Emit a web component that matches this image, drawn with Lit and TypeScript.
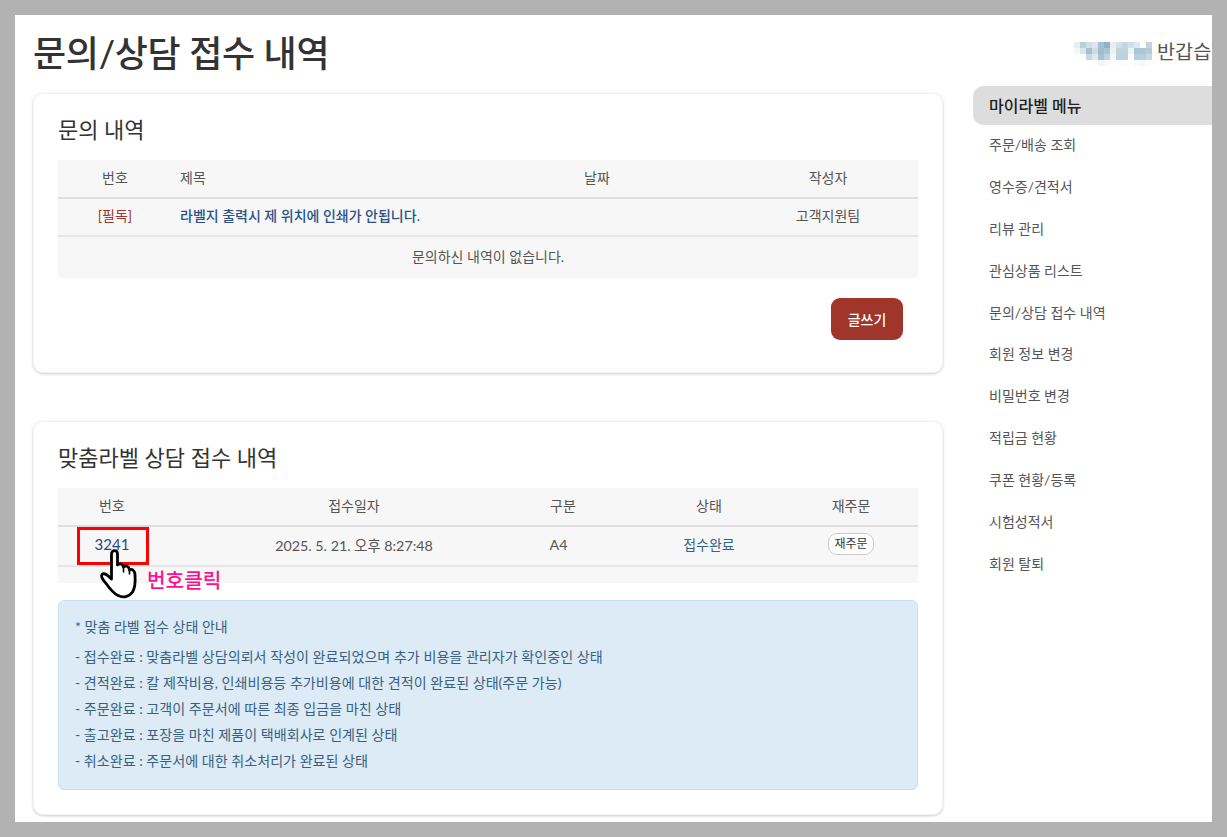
import { LitElement, html, css } from "lit";
import { customElement } from "lit/decorators.js";

const MENU = ["주문/배송 조회","영수증/견적서","리뷰 관리","관심상품 리스트","문의/상담 접수 내역","회원 정보 변경","비밀번호 변경","적립금 현황","쿠폰 현황/등록","시험성적서","회원 탈퇴"];
const NOTES = [
  "- 접수완료 : 맞춤라벨 상담의뢰서 작성이 완료되었으며 추가 비용을 관리자가 확인중인 상태",
  "- 견적완료 : 칼 제작비용, 인쇄비용등 추가비용에 대한 견적이 완료된 상태(주문 가능)",
  "- 주문완료 : 고객이 주문서에 따른 최종 입금을 마친 상태",
  "- 출고완료 : 포장을 마친 제품이 택배회사로 인계된 상태",
  "- 취소완료 : 주문서에 대한 취소처리가 완료된 상태",
];
const MOSAIC = [
  "#e6eef2","#b9cfdc","#cfdfe8","#dde8ee","#a3c0d0","#8fb0c5","#e6eef3","#d2e0e8","#c4d6e0","#d2e0e8","#dfe8ee","#ffffff","#c0d3de",
  "#f3f6f8","#d9e5ec","#a7c1d1","#cfdee6","#a0bccd","#a9c4d3","#ecf1f5","#bfd3df","#bfd3df","#eef3f6","#adc6d4","#adc6d4","#b6ccd9",
  "#ffffff","#ffffff","#c5d7e1","#e0e9ee","#a9c3d2","#c0d4df","#f4f7f9","#bed2de","#bed2de","#ffffff","#b8cedb","#b8cedb","#c8d9e3",
  "#ffffff","#ffffff","#ffffff","#fbfcfd","#f3f6f8","#f7f9fb","#ffffff","#fbfcfd","#fbfcfd","#ffffff","#f8fafb","#f5f8fa","#fbfcfd",
];

@customElement("app-root")
export class AppRoot extends LitElement {
  static styles = css`
    :host { display: block; height: 837px; box-sizing: border-box; padding: 15px; background: #b2b2b2; overflow: hidden;
      font-family: "Lato", "Noto Sans CJK KR", sans-serif; color: #444; font-size: 14px; }
    .page { background: #fff; height: 807px; overflow: hidden; display: grid; grid-template-columns: 910px 239px; column-gap: 30px; padding-left: 18px; }
    h1 { margin: 0; height: 78px; box-sizing: border-box; padding-top: 12px; font-size: 36px; line-height: 52px; font-weight: 500; color: #333; letter-spacing: -0.3px; }
    .card { box-sizing: border-box; background: #fff; border-radius: 10px; border: 1px solid #f3f3f3; box-shadow: 0 1px 3px rgba(0,0,0,.2); padding: 0 24px; }
    .c1 { height: 280px; margin-bottom: 48px; }
    .c2 { height: 394px; }
    h2 { margin: 0; height: 66px; box-sizing: border-box; padding-top: 20px; font-size: 22px; line-height: 32px; font-weight: 400; color: #333; }
    table { border-collapse: separate; border-spacing: 0; width: 860px; table-layout: fixed; background: #f7f7f7; }
    th, td { font-weight: 400; text-align: center; padding: 0; font-size: 14px; color: #555; }
    th { height: 34px; padding-bottom: 3px; border-bottom: 2px solid #dedede; }
    td { border-bottom: 2px solid #e6e6e6; height: 32px; padding-bottom: 4px; }
    .tall td { height: 34px; padding-bottom: 4px; }
    .left { text-align: left; padding-left: 8px; }
    .empty td { height: 38px; padding-bottom: 3px; border-bottom: 0; }
    .must { color: #a0352c; }
    td.link { color: #2a5288; font-weight: 500; }
    td.num { font-size: 15px; font-weight: 400; color: #1f4a80; }
    th.shift, td.shift { padding-left: 50px; }
    td.status { color: #2f6490; }
    td.date { font-size: 14.3px; color: #555; }
    td.kind { padding-right: 9px; }
    .actions { display: flex; justify-content: flex-end; margin: 20px 15px 0 0; }
    .write { width: 72px; height: 42px; border: 0; border-radius: 9px; background: #a0352c; color: #fff; font: 500 14px "Lato", "Noto Sans CJK KR", sans-serif; padding: 0; }
    .wrap { position: relative; }
    .filler { height: 16px; background: #f7f7f7; }
    .again { display: inline-block; box-sizing: border-box; width: 46px; height: 22px; line-height: 19px; border: 1px solid #ccc; border-radius: 9px; background: #fff; font-size: 12px; color: #333; vertical-align: middle; }
    .redbox { position: absolute; left: 19px; top: 39px; width: 72px; height: 38px; box-sizing: border-box; border: 3px solid #f00; }
    .hand { position: absolute; left: 40px; top: 60px; width: 42px; height: 52px; }
    .click { position: absolute; left: 89px; top: 77px; font-size: 20.2px; line-height: 30px; color: #ff0f8f; font-weight: 500; white-space: nowrap; }
    .alert { box-sizing: border-box; margin-top: 17px; height: 190px; padding: 14px 16px; background: #dcebf5; border: 1px solid #c5e3ef; border-radius: 6px; color: #3a6080; font-size: 14.08px; }
    .alert p { margin: 0; height: 25.8px; line-height: 25.8px; white-space: nowrap; }
    .alert .head { height: 29.4px; line-height: 24px; font-size: 14px; }
    aside { min-width: 0; overflow: hidden; }
    .hello { height: 71px; box-sizing: border-box; padding: 23px 0 0 101px; display: flex; align-items: flex-start; gap: 5px; white-space: nowrap; font-size: 19.7px; line-height: 28px; color: #555; }
    .mosaic { flex: none; display: grid; grid-template-columns: repeat(13, 6px); grid-auto-rows: 6px; margin-top: 4px; }
    .mi { display: block; }
    .active { height: 39px; line-height: 39px; padding-left: 16px; background: #ddd; border-radius: 10px 0 0 10px; font-size: 16px; font-weight: 500; color: #222; }
    ul { list-style: none; margin: 0; padding: 0; }
    li { height: 41.9px; line-height: 40px; padding-left: 16px; font-size: 14px; color: #555; }
  `;

  render() {
    return html`
      <div class="page">
        <main>
          <h1>문의/상담 접수 내역</h1>
          <section class="card c1">
            <h2>문의 내역</h2>
            <table>
              <colgroup><col style="width:114px"><col style="width:284px"><col style="width:282px"><col></colgroup>
              <thead><tr><th>번호</th><th class="left">제목</th><th>날짜</th><th>작성자</th></tr></thead>
              <tbody>
                <tr><td class="must">[필독]</td><td class="left link" colspan="2">라벨지 출력시 제 위치에 인쇄가 안됩니다.</td><td>고객지원팀</td></tr>
                <tr class="empty"><td colspan="4">문의하신 내역이 없습니다.</td></tr>
              </tbody>
            </table>
            <div class="actions"><button class="write">글쓰기</button></div>
          </section>
          <section class="card c2">
            <h2>맞춤라벨 상담 접수 내역</h2>
            <div class="wrap">
              <table>
                <colgroup><col style="width:108px"><col style="width:376px"><col style="width:42px"><col style="width:200px"><col></colgroup>
                <thead><tr><th>번호</th><th>접수일자</th><th>구분</th><th class="shift">상태</th><th>재주문</th></tr></thead>
                <tbody>
                  <tr class="tall"><td class="link num">3241</td><td class="date">2025. 5. 21. 오후 8:27:48</td><td class="date kind">A4</td><td class="status shift">접수완료</td><td><span class="again">재주문</span></td></tr>
                </tbody>
              </table>
              <div class="filler"></div>
              <div class="redbox"></div>
              <svg class="hand" viewBox="0 0 42 52" fill="none">
                <path d="M13.5 31V6C13.5 1.5 19.5 1.5 19.5 6V17C22 15 25 16 25.5 19C28 17 31 18 31.5 22C34 20.5 37 22.5 37 27C37.5 34 37 40 34.5 44C31 49 25 50 20 47.5C15 45 12 41 8.5 36C6 33 2 29 4 26.5C6 24.5 10 27 13.5 31" fill="#fff" stroke="#000" stroke-width="2.8" stroke-linecap="round" stroke-linejoin="round"/>
                <path d="M25.5 19V24M31.5 22V26" stroke="#000" stroke-width="1.6" stroke-linecap="round"/>
              </svg>
              <div class="click">번호클릭</div>
            </div>
            <div class="alert">
              <p class="head">* 맞춤 라벨 접수 상태 안내</p>
              ${NOTES.map((n) => html`<p>${n}</p>`)}
            </div>
          </section>
        </main>
        <aside>
          <div class="hello">
            <span class="mosaic">${MOSAIC.map((c) => html`<i class="mi" style="background:${c}"></i>`)}</span>
            <span>반갑습</span>
          </div>
          <div class="active">마이라벨 메뉴</div>
          <ul>${MENU.map((m) => html`<li>${m}</li>`)}</ul>
        </aside>
      </div>
    `;
  }
}
